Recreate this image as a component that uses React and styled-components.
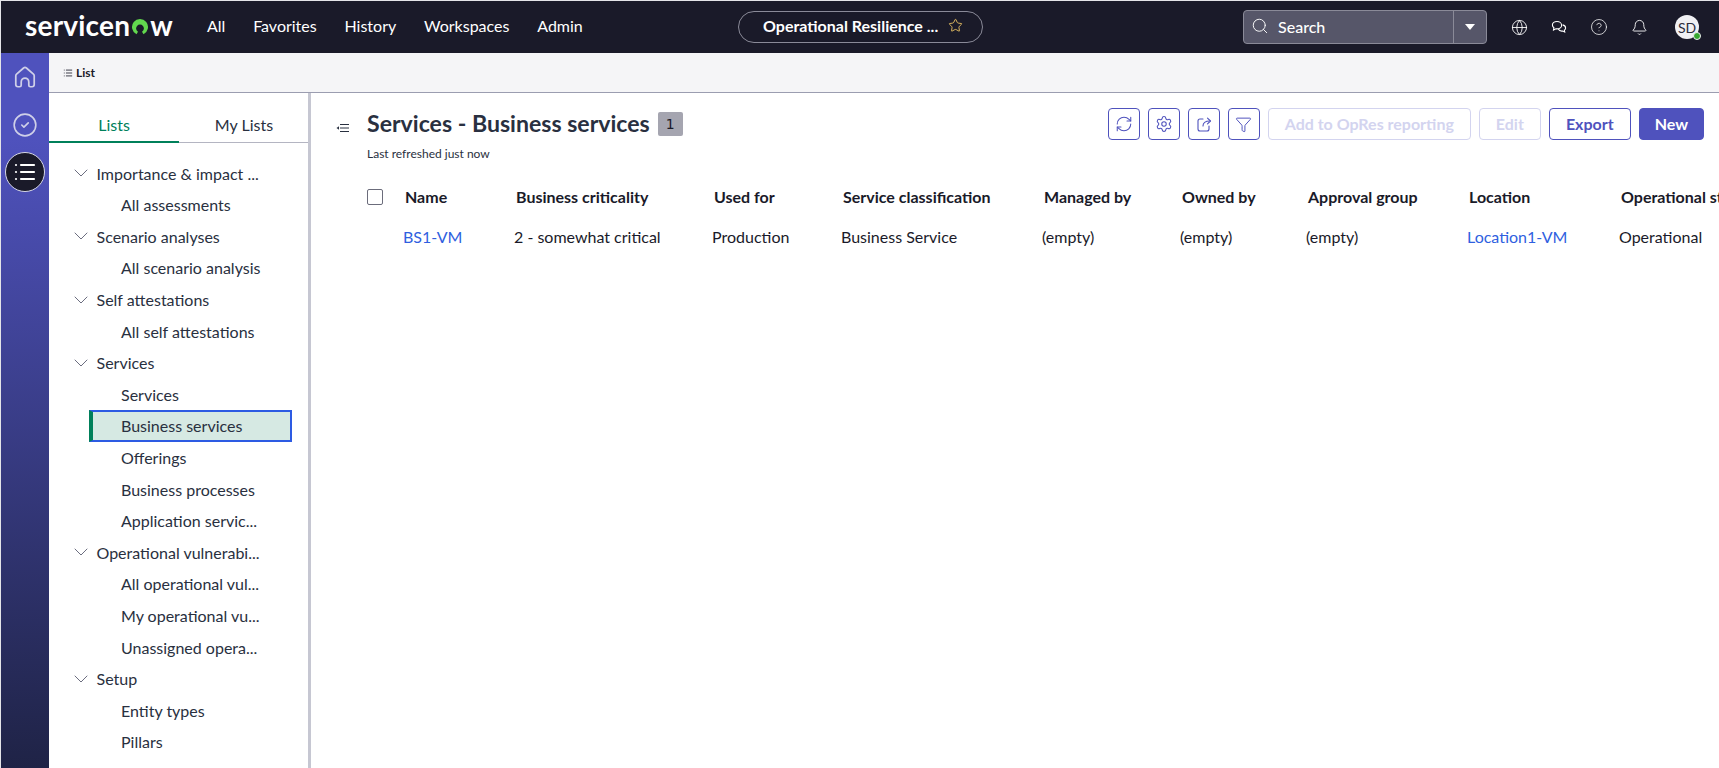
import styled, { createGlobalStyle } from "styled-components";
import {
  Bell,
  ChevronDown,
  CircleCheck,
  CircleHelp,
  Funnel,
  Globe,
  List,
  RefreshCw,
  Search,
  Settings,
  Star,
} from "lucide-react";

const GlobalStyle = createGlobalStyle`
  html, body {
    margin: 0;
    padding: 0;
    height: 100%;
    background: #fff;
    overflow: hidden;
  }
  * {
    box-sizing: border-box;
  }
`;

const Page = styled.div`
  width: 1719px;
  height: 768px;
  display: flex;
  flex-direction: column;
  overflow: hidden;
  font-family: Lato, "Open Sans", sans-serif;
  font-size: 16px;
  color: #293040;
  padding: 1px 0 0 1px;
  background: #e4e4e8;
`;

const TopBar = styled.header`
  flex: 0 0 52px;
  background: #1a1a29;
  display: flex;
  align-items: center;
  color: #fff;
  position: relative;
`;

const Logo = styled.div`
  display: flex;
  align-items: center;
  margin-left: 24px;
  padding-bottom: 4px;
  width: 182px;
  font-size: 28px;
  font-weight: 700;
  letter-spacing: 0.2px;
  color: #fff;
  line-height: 1;
`;

const LogoRing = styled.svg`
  width: 20px;
  height: 20px;
  margin: 4px 0 0 0;
`;

const NavLinks = styled.nav`
  display: flex;
  gap: 27.8px;
  width: 531px;
  padding-bottom: 4px;
  font-size: 16px;
`;

const Pill = styled.div`
  width: 245px;
  height: 32px;
  border: 1px solid #8a8a98;
  border-radius: 16px;
  display: flex;
  align-items: center;
  padding: 0 0 4px 24px;
  gap: 10px;
  font-weight: 700;
  font-size: 16px;
  white-space: nowrap;
`;

const SearchBox = styled.div`
  margin-left: 260px;
  width: 244px;
  height: 34px;
  background: #565669;
  border: 1px solid #8a8a98;
  border-radius: 4px;
  display: flex;
  align-items: center;
`;

const SearchField = styled.div`
  flex: 1;
  display: flex;
  align-items: center;
  gap: 9px;
  padding: 0 0 2px 7px;
  font-weight: 500;
  font-size: 16px;
`;

const SearchCaret = styled.div`
  width: 33px;
  height: 100%;
  border-left: 1px solid #8a8a98;
  display: flex;
  align-items: center;
  justify-content: center;

  &::before {
    content: "";
    border-left: 5.5px solid transparent;
    border-right: 5.5px solid transparent;
    border-top: 6px solid #fff;
  }
`;

const TopIcons = styled.div`
  display: flex;
  align-items: center;
  margin-left: 23px;
  gap: 22px;
`;

const TopIcon = styled.span`
  width: 18px;
  height: 18px;
  display: flex;
  align-items: center;
  justify-content: center;
  color: #fff;
`;

const AvatarCircle = styled.div`
  position: relative;
  width: 24px;
  height: 24px;
  margin-left: 27px;
  border-radius: 50%;
  background: #f0f0f3;
  color: #2b2b3a;
  font-size: 14px;
  display: flex;
  align-items: center;
  justify-content: center;
`;

const AvatarDot = styled.span`
  position: absolute;
  right: -2px;
  bottom: -1px;
  width: 8px;
  height: 8px;
  border-radius: 50%;
  background: #35a82e;
  border: 1px solid #f0f0f3;
`;

const Body = styled.div`
  flex: 1;
  display: flex;
  min-height: 0;
`;

const Rail = styled.aside`
  flex: 0 0 48px;
  background: linear-gradient(180deg, #4f52bd 0%, #4f52bd 12%, #1f2346 100%);
  display: flex;
  flex-direction: column;
  align-items: center;
  padding-top: 11px;
  gap: 22px;
  color: #cfd0e8;
`;

const RailCircle = styled.div`
  width: 40px;
  height: 40px;
  margin-top: -8px;
  border-radius: 50%;
  background: #1a1a29;
  border: 1px solid #d7d8e6;
  color: #fff;
  display: flex;
  align-items: center;
  justify-content: center;
`;

const Content = styled.div`
  flex: 1;
  min-width: 0;
  display: flex;
  flex-direction: column;
  background: #fff;
`;

const SubHeader = styled.div`
  flex: 0 0 40px;
  background: #f5f5f7;
  border-bottom: 1px solid #9b9db0;
  display: flex;
  align-items: center;
  gap: 3px;
  padding-left: 14px;
  font-size: 12px;
  font-weight: 700;
  color: #1a1a29;
`;

const Panels = styled.div`
  flex: 1;
  display: flex;
  min-height: 0;
`;

const Sidebar = styled.aside`
  flex: 0 0 262px;
  border-right: 3px solid #c6c7d2;
  overflow: hidden;
`;

const Tabs = styled.div`
  display: flex;
  margin-top: 17px;
  height: 33px;
  border-bottom: 1px solid #b4b5c2;
`;

const Tab = styled.div`
  flex: 0 0 130px;
  text-align: center;
  line-height: 30px;
  color: ${(p) => (p.$active ? "#00805a" : "#293040")};
  border-bottom: ${(p) => (p.$active ? "2px solid #00805a" : "none")};
  height: 33px;
`;

const Tree = styled.div`
  padding: 14.400px 0 0 20px;
`;

const ParentRow = styled.div`
  height: 31.6px;
  display: flex;
  align-items: center;
  gap: 3.5px;
  white-space: nowrap;
  color: #293040;
`;

const ChildRow = styled.div`
  height: 31.6px;
  margin-left: 20px;
  width: 203px;
  padding-left: 32px;
  display: flex;
  align-items: center;
  white-space: nowrap;
  color: #293040;
  ${(p) =>
    p.$selected &&
    `
    background: #d6e9e3;
    border: 2px solid #2d5be3;
    border-left: 4px solid #00805a;
    padding-left: 28px;
  `}
`;

const Main = styled.main`
  flex: 1;
  min-width: 0;
  overflow: hidden;
  padding: 16px 15px 0 25px;
`;

const TitleRow = styled.div`
  display: flex;
  align-items: flex-start;
  justify-content: space-between;
  height: 32px;
`;

const TitleGroup = styled.div`
  display: flex;
  align-items: center;
  height: 28px;
  margin-top: 1px;
`;

const CollapseSlot = styled.span`
  display: flex;
  margin-top: 8px;
`;

const Title = styled.h1`
  margin: 0 0 0 17px;
  padding-bottom: 2px;
  font-size: 23.100px;
  font-weight: 700;
  color: #293040;
`;

const CountChip = styled.span`
  margin-left: 8px;
  width: 25px;
  height: 24px;
  border-radius: 2px;
  background: #a5a5b0;
  color: #1a1a29;
  font-size: 14px;
  font-family: "DejaVu Sans", sans-serif;
  display: flex;
  align-items: center;
  justify-content: center;
`;

const Actions = styled.div`
  display: flex;
  gap: 8px;
  margin-top: -1px;
`;

const IconButton = styled.button`
  width: 32px;
  height: 32px;
  padding: 0;
  background: #fff;
  border: 1px solid #4f52bd;
  border-radius: 4px;
  color: #4f52bd;
  display: flex;
  align-items: center;
  justify-content: center;
`;

const Button = styled.button`
  height: 32px;
  padding: 0 ${(p) => p.$pad || 16}px 2px;
  font-family: inherit;
  font-size: 16px;
  font-weight: 700;
  border-radius: 4px;
  border: 1px solid ${(p) => (p.$disabled ? "#d3d4ef" : "#4f52bd")};
  color: ${(p) => (p.$primary ? "#fff" : p.$disabled ? "#d3d4ef" : "#4f52bd")};
  background: ${(p) => (p.$primary ? "#4f52bd" : "#fff")};
`;

const Refreshed = styled.div`
  margin: 5px 0 0 31px;
  font-size: 12px;
  color: #293040;
`;

const Grid = styled.div`
  margin: 22px 0 0 31px;
  display: grid;
  grid-template-columns: 36px 111px 198px 129px 201px 138px 126px 161px 152px 200px;
  white-space: nowrap;
  width: 1500px;
`;

const HeadCell = styled.div`
  height: 27px;
  display: flex;
  align-items: center;
  padding-left: 2px;
  font-weight: 700;
  color: #1a1a29;
`;

const Checkbox = styled.span`
  width: 16px;
  height: 16px;
  border: 1px solid #6b6c7b;
  border-radius: 2px;
  margin-left: -2px;
`;

const Cell = styled.div`
  height: 27px;
  margin-top: 13px;
  display: flex;
  align-items: center;
  color: ${(p) => (p.$link ? "#2f5fe0" : "#1a1a29")};
`;

const ICON = 18;

const HomeIcon = () => (
  <svg width="26" height="26" viewBox="0 0 24 24" fill="none" stroke="currentColor" strokeWidth="1.6" strokeLinejoin="round">
    <path d="M3.500 10.800Q3.500 10 4.200 9.400L10.700 3.700Q12 2.700 13.300 3.700L19.800 9.400Q20.500 10 20.500 10.800V19a2 2 0 0 1-2 2H17a1.500 1.500 0 0 1-1.500-1.500V16.500a3.500 3.500 0 0 0-7 0V19.500A1.500 1.500 0 0 1 7 21H5.500a2 2 0 0 1-2-2z" />
  </svg>
);

const ChatIcon = () => (
  <svg width="18" height="18" viewBox="0 0 18 18" fill="none" stroke="currentColor" strokeWidth="1.1">
    <path d="M7 3.500c-2.600 0-4.600 1.600-4.600 3.600 0 1.100.6 2 1.500 2.700L3.500 12l2.400-1.200c.4.1.8.1 1.100.1 2.600 0 4.600-1.600 4.600-3.700S9.600 3.500 7 3.500z" />
    <path d="M12.600 6.900c1.800.4 3 1.600 3 3 0 .9-.5 1.700-1.200 2.200l.3 1.900-1.900-1c-1.900.3-3.800-.5-4.500-2" />
  </svg>
);

const ShareIcon = () => (
  <svg width="18" height="18" viewBox="0 0 18 18" fill="none" stroke="currentColor" strokeWidth="1.1" strokeLinecap="round" strokeLinejoin="round">
    <path d="M8 4H5a2 2 0 0 0-2 2v8a2 2 0 0 0 2 2h7a2 2 0 0 0 2-2v-3" />
    <path d="M8 11c0-3 2-5 7-5" />
    <path d="M12.500 3.200 15.500 6l-3 2.800" />
  </svg>
);

const CollapseIcon = () => (
  <svg width="14" height="10" viewBox="0 0 14 10" fill="none" stroke="#293040" strokeWidth="1">
    <path d="M4 1.500h9M4 5h9M4 8.500h9" />
    <path d="M0.500 5 3 3.200v3.600z" fill="#293040" stroke="none" />
  </svg>
);

const tree = [
  ["Importance & impact ...", "All assessments"],
  ["Scenario analyses", "All scenario analysis"],
  ["Self attestations", "All self attestations"],
  ["Services", "Services", "Business services", "Offerings", "Business processes", "Application servic..."],
  ["Operational vulnerabi...", "All operational vul...", "My operational vu...", "Unassigned opera..."],
  ["Setup", "Entity types", "Pillars"],
];

const headers = [
  "Name",
  "Business criticality",
  "Used for",
  "Service classification",
  "Managed by",
  "Owned by",
  "Approval group",
  "Location",
  "Operational status",
];

const cells = [
  { text: "BS1-VM", link: true },
  { text: "2 - somewhat critical" },
  { text: "Production" },
  { text: "Business Service" },
  { text: "(empty)" },
  { text: "(empty)" },
  { text: "(empty)" },
  { text: "Location1-VM", link: true },
  { text: "Operational" },
];

export default function App() {
  return (
    <Page>
      <GlobalStyle />
      <TopBar>
        <Logo>
          servicen
          <LogoRing viewBox="0 0 20 20">
            <path
              d="M6.500 17.200A8 8 0 1 1 13.500 17.200L12 14.800a3.900 3.900 0 1 0-4 0z"
              fill="#62d84e"
            />
          </LogoRing>
          w
        </Logo>
        <NavLinks>
          <span>All</span>
          <span>Favorites</span>
          <span>History</span>
          <span>Workspaces</span>
          <span>Admin</span>
        </NavLinks>
        <Pill>
          Operational Resilience ...
          <Star size={15} color="#e3bd62" strokeWidth={1.5} />
        </Pill>
        <SearchBox>
          <SearchField>
            <Search size={18} strokeWidth={1.25} />
            Search
          </SearchField>
          <SearchCaret />
        </SearchBox>
        <TopIcons>
          <TopIcon>
            <Globe size={17} strokeWidth={1.25} />
          </TopIcon>
          <TopIcon>
            <ChatIcon />
          </TopIcon>
          <TopIcon>
            <CircleHelp size={18} strokeWidth={1} />
          </TopIcon>
          <TopIcon>
            <Bell size={17} strokeWidth={1.25} />
          </TopIcon>
        </TopIcons>
        <AvatarCircle>
          SD
          <AvatarDot />
        </AvatarCircle>
      </TopBar>
      <Body>
        <Rail>
          <HomeIcon />
          <CircleCheck size={26} strokeWidth={1.5} />
          <RailCircle>
            <List size={24} strokeWidth={2.2} />
          </RailCircle>
        </Rail>
        <Content>
          <SubHeader>
            <List size={10} strokeWidth={2} />
            List
          </SubHeader>
          <Panels>
            <Sidebar>
              <Tabs>
                <Tab $active>Lists</Tab>
                <Tab>My Lists</Tab>
              </Tabs>
              <Tree>
                {tree.map(([parent, ...children]) => (
                  <div key={parent}>
                    <ParentRow>
                      <ChevronDown size={24} strokeWidth={0.9} color="#5a5c70" />
                      {parent}
                    </ParentRow>
                    {children.map((child) => (
                      <ChildRow key={child} $selected={child === "Business services"}>
                        {child}
                      </ChildRow>
                    ))}
                  </div>
                ))}
              </Tree>
            </Sidebar>
            <Main>
              <TitleRow>
                <TitleGroup>
                  <CollapseSlot>
                    <CollapseIcon />
                  </CollapseSlot>
                  <Title>Services - Business services</Title>
                  <CountChip>1</CountChip>
                </TitleGroup>
                <Actions>
                  <IconButton>
                    <RefreshCw size={ICON} strokeWidth={1.4} />
                  </IconButton>
                  <IconButton>
                    <Settings size={ICON} strokeWidth={1.4} />
                  </IconButton>
                  <IconButton>
                    <ShareIcon />
                  </IconButton>
                  <IconButton>
                    <Funnel size={17} strokeWidth={1.4} />
                  </IconButton>
                  <Button $disabled>Add to OpRes reporting</Button>
                  <Button $disabled>Edit</Button>
                  <Button>Export</Button>
                  <Button $primary $pad={15}>
                    New
                  </Button>
                </Actions>
              </TitleRow>
              <Refreshed>Last refreshed just now</Refreshed>
              <Grid>
                <HeadCell>
                  <Checkbox />
                </HeadCell>
                {headers.map((h) => (
                  <HeadCell key={h}>{h}</HeadCell>
                ))}
                <Cell />
                {cells.map((c, i) => (
                  <Cell key={i} $link={c.link}>
                    {c.text}
                  </Cell>
                ))}
              </Grid>
            </Main>
          </Panels>
        </Content>
      </Body>
    </Page>
  );
}
